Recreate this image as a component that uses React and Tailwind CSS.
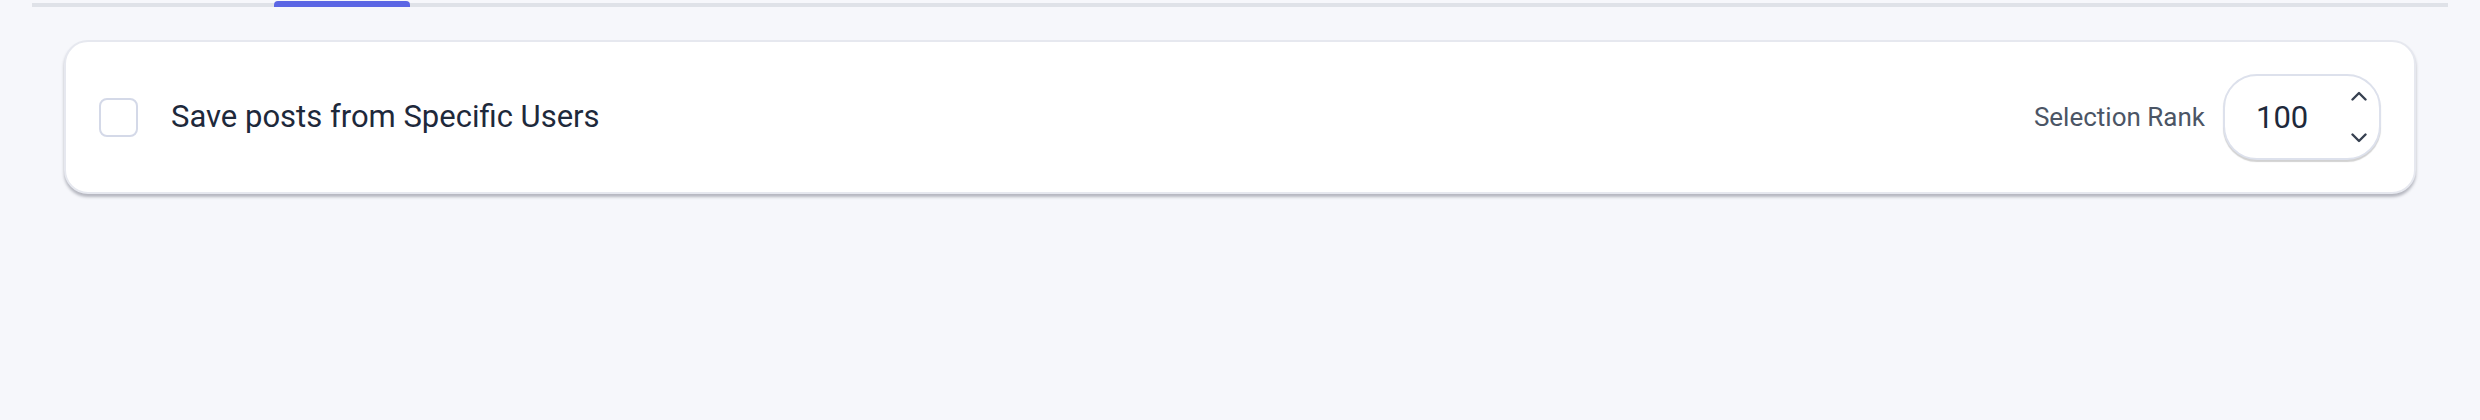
import { useState } from 'react';

const Chevron = ({ up }) => (
  <svg width="16" height="10" viewBox="0 0 16 10" fill="none" className="text-[#374151]">
    <path
      d={up ? 'M1.5 8.5 L8 2 L14.5 8.5' : 'M1.5 1.5 L8 8 L14.5 1.5'}
      stroke="currentColor"
      strokeWidth="2.4"
      strokeLinecap="round"
      strokeLinejoin="round"
    />
  </svg>
);

const RankInput = ({ value, onChange }) => (
  <div className="flex items-center w-[158px] h-[86px] rounded-[34px] border-2 border-[#dde1ec] bg-white shadow-[0_2px_1px_rgba(0,0,0,0.18)] pl-[31px] pr-[12px]">
    <span className="flex-1 text-[31px] leading-none text-[#1e293b]">{value}</span>
    <div className="flex flex-col items-center gap-[32px]">
      <button type="button" onClick={() => onChange(value + 1)} className="flex">
        <Chevron up />
      </button>
      <button type="button" onClick={() => onChange(value - 1)} className="flex">
        <Chevron />
      </button>
    </div>
  </div>
);

export default function App() {
  const [checked, setChecked] = useState(false);
  const [rank, setRank] = useState(100);

  return (
    <div className="h-[420px] bg-[#f6f7fb] font-['Roboto','Liberation_Sans',sans-serif]">
      {/* tab strip with active indicator */}
      <div className="mx-8 flex items-end h-[7px]">
        <div className="w-[242px] h-1 bg-[#dfe2e8]" />
        <div className="w-[136px] h-[6px] rounded-t-[4px] bg-[#5b66e4]" />
        <div className="flex-1 h-1 bg-[#dfe2e8]" />
      </div>

      <div className="px-16 pt-[33px]">
        <div className="flex items-center justify-between h-[154px] px-[33px] bg-white rounded-[24px] border-2 border-[#e6e8ef] shadow-[0_3px_3px_rgba(60,64,80,0.35)]">
          <label className="flex items-center gap-[33px] cursor-pointer">
            <input
              type="checkbox"
              checked={checked}
              onChange={(e) => setChecked(e.target.checked)}
              className="appearance-none w-[39px] h-[39px] rounded-[8px] border-2 border-[#d4d9e8] bg-white"
            />
            <span className="text-[31px] text-[#1e293b]">Save posts from Specific Users</span>
          </label>

          <div className="flex items-center gap-[18px]">
            <span className="text-[26px] text-[#4b5565]">Selection Rank</span>
            <RankInput value={rank} onChange={setRank} />
          </div>
        </div>
      </div>
    </div>
  );
}
